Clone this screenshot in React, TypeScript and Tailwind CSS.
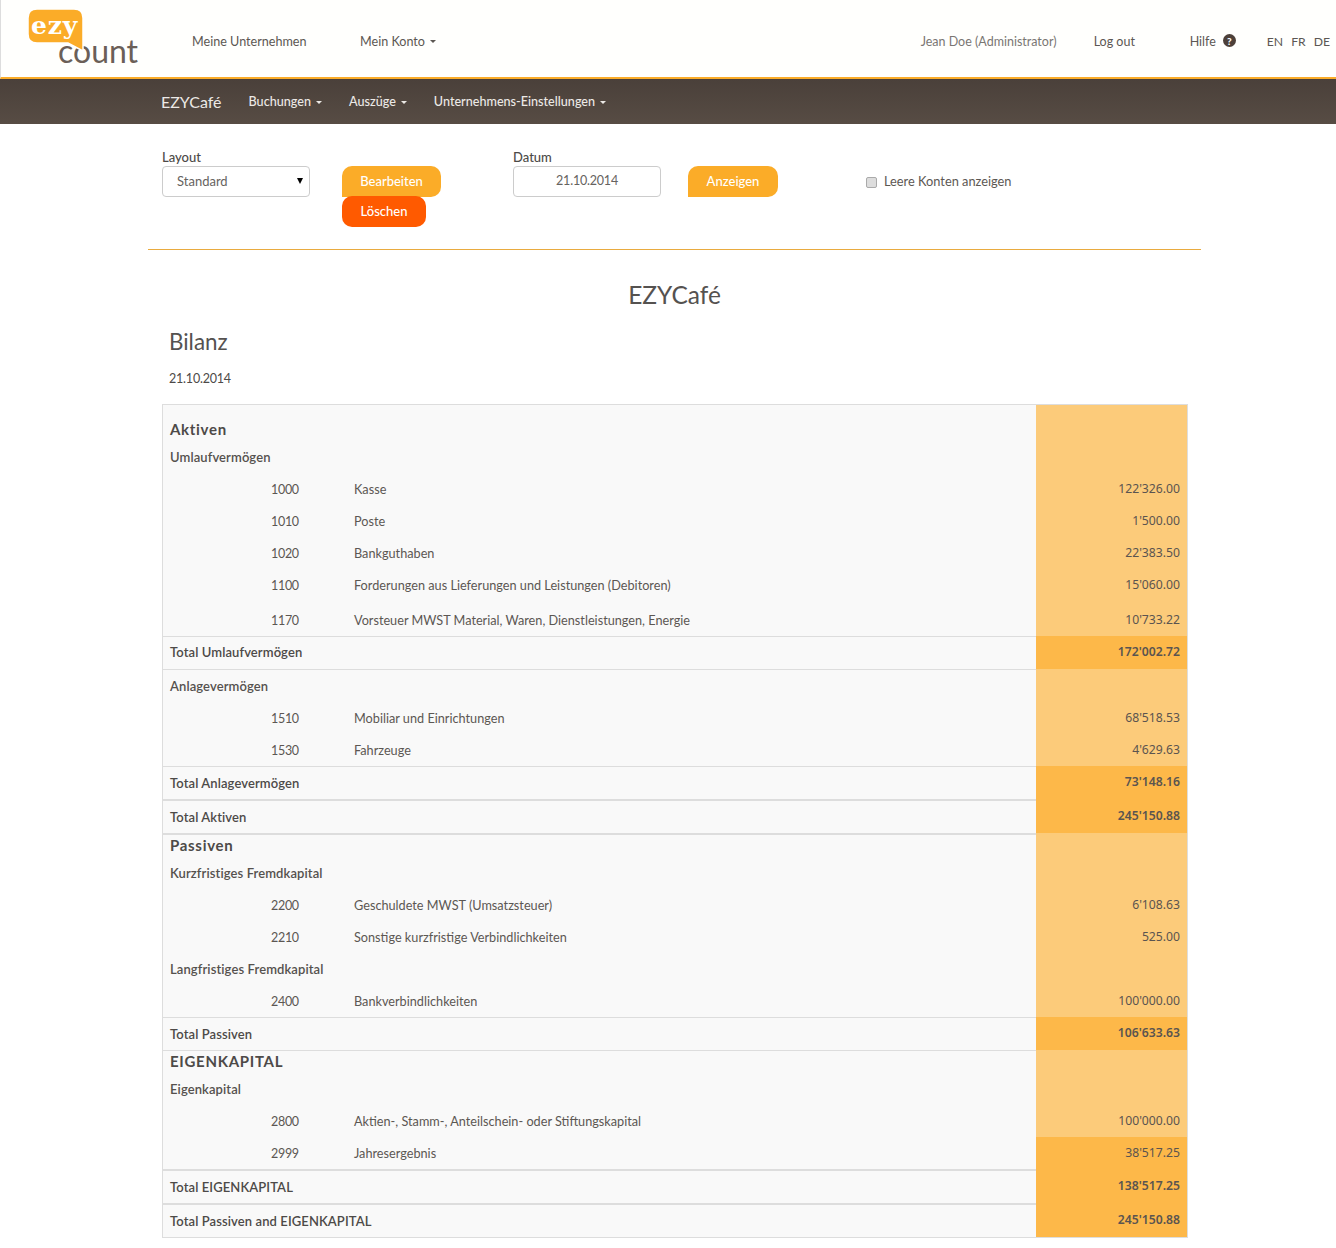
type Row = {
   kind: 'head' | 'group' | 'account' | 'total';
   label: string;
   no?: string;
   amount?: string;
   height: string;
   pad?: string;
   amountPad?: string;
   border?: string;
   dark?: boolean;
};

const thin = 'border-t border-[#dddddd]';
const thick = 'border-t-2 border-[#dddddd]';

const rows: Row[] = [
   { kind: 'head', label: 'Aktiven', height: 'h-[36px]', pad: 'pt-[12px]' },
   { kind: 'group', label: 'Umlaufvermögen', height: 'h-[32px]' },
   { kind: 'account', no: '1000', label: 'Kasse', amount: "122'326.00", height: 'h-[32px]' },
   { kind: 'account', no: '1010', label: 'Poste', amount: "1'500.00", height: 'h-[32px]' },
   { kind: 'account', no: '1020', label: 'Bankguthaben', amount: "22'383.50", height: 'h-[32px]' },
   { kind: 'account', no: '1100', label: 'Forderungen aus Lieferungen und Leistungen (Debitoren)', amount: "15'060.00", height: 'h-[32px]' },
   { kind: 'account', no: '1170', label: 'Vorsteuer MWST Material, Waren, Dienstleistungen, Energie', amount: "10'733.22", height: 'h-[35px]', pad: 'pt-[5px]', amountPad: 'pt-[3px]' },
   { kind: 'total', label: 'Total Umlaufvermögen', amount: "172'002.72", height: 'h-[33px]', border: thin, pad: 'pt-0' },
   { kind: 'group', label: 'Anlagevermögen', height: 'h-[33px]', border: thin },
   { kind: 'account', no: '1510', label: 'Mobiliar und Einrichtungen', amount: "68'518.53", height: 'h-[32px]' },
   { kind: 'account', no: '1530', label: 'Fahrzeuge', amount: "4'629.63", height: 'h-[32px]' },
   { kind: 'total', label: 'Total Anlagevermögen', amount: "73'148.16", height: 'h-[33px]', border: thin },
   { kind: 'total', label: 'Total Aktiven', amount: "245'150.88", height: 'h-[34px]', border: thick },
   { kind: 'head', label: 'Passiven', height: 'h-[24px]', border: thick, pad: 'pb-[1px]' },
   { kind: 'group', label: 'Kurzfristiges Fremdkapital', height: 'h-[32px]' },
   { kind: 'account', no: '2200', label: 'Geschuldete MWST (Umsatzsteuer)', amount: "6'108.63", height: 'h-[32px]' },
   { kind: 'account', no: '2210', label: 'Sonstige kurzfristige Verbindlichkeiten', amount: '525.00', height: 'h-[32px]' },
   { kind: 'group', label: 'Langfristiges Fremdkapital', height: 'h-[32px]' },
   { kind: 'account', no: '2400', label: 'Bankverbindlichkeiten', amount: "100'000.00", height: 'h-[32px]' },
   { kind: 'total', label: 'Total Passiven', amount: "106'633.63", height: 'h-[33px]', border: thin },
   { kind: 'head', label: 'EIGENKAPITAL', height: 'h-[23px]', border: thin, pad: 'pb-[1px]' },
   { kind: 'group', label: 'Eigenkapital', height: 'h-[32px]' },
   { kind: 'account', no: '2800', label: 'Aktien-, Stamm-, Anteilschein- oder Stiftungskapital', amount: "100'000.00", height: 'h-[32px]' },
   { kind: 'account', no: '2999', label: 'Jahresergebnis', amount: "38'517.25", height: 'h-[32px]', dark: true },
   { kind: 'total', label: 'Total EIGENKAPITAL', amount: "138'517.25", height: 'h-[34px]', border: thick },
   { kind: 'total', label: 'Total Passiven and EIGENKAPITAL', amount: "245'150.88", height: 'h-[34px]', border: thick },
];

function Logo() {
   return (
      <svg width="112" height="60" viewBox="0 0 112 60" className="shrink-0">
         <text x="30" y="54" fontFamily="'Lato', sans-serif" fontWeight="400" fontSize="32" fill="#6b5f58">
            count
         </text>
         <path
            d="M9 0H46Q55 0 55 9V42L40 34H9Q0 34 0 25V9Q0 0 9 0Z"
            fill="#fbac28"
            stroke="#ffffff"
            strokeWidth="1.5"
         />
         <text x="3" y="25" fontFamily="'DejaVu Serif', serif" fontWeight="700" fontSize="25" letterSpacing="0.8" fill="#ffffff">
            ezy
         </text>
      </svg>
   );
}

function Caret({ className }: { className: string }) {
   return <span className={`inline-block border-x-[3px] border-t-[3px] border-x-transparent ${className}`} />;
}

function NavItem({ label }: { label: string }) {
   return (
      <span className="flex items-center gap-[5px] pt-[2px] text-[12.6px] font-medium text-[#ece9e6]">
         {label}
         <Caret className="border-t-[#ece9e6]" />
      </span>
   );
}

function TableRow({ row }: { row: Row }) {
   const isDark = row.kind === 'total' || row.dark;
   return (
      <div className={`flex ${row.height}`}>
         <div className={`flex flex-1 items-center pl-[7px] text-[#4d4a48] ${row.border ?? ''} ${row.pad ?? 'pt-[2px]'}`}>
            {row.kind === 'head' && (
               <span className="text-[15px] font-bold tracking-[0.7px]">{row.label}</span>
            )}
            {row.kind === 'group' && (
               <span className="text-[13px] font-semibold tracking-[0.1px] text-[#55514e]">{row.label}</span>
            )}
            {row.kind === 'total' && (
               <span className="text-[13px] font-semibold tracking-[0.1px]">{row.label}</span>
            )}
            {row.kind === 'account' && (
               <>
                  <span className="w-[184px] pl-[101px] text-[12.5px] tracking-[-0.3px] text-[#5c5753]">{row.no}</span>
                  <span className="text-[12.7px] text-[#5c5753]">{row.label}</span>
               </>
            )}
         </div>
         <div
            className={`flex w-[151px] shrink-0 items-center justify-end pr-[7px] text-[12.2px] text-[#5a5450] [font-family:'Noto_Sans',sans-serif] ${
               isDark ? 'bg-[#fdb849]' : 'bg-[#fccb7a]'
            } ${row.kind === 'total' ? 'font-semibold' : ''} ${row.amountPad ?? ''}`}
         >
            {row.amount}
         </div>
      </div>
   );
}

export default function App() {
   return (
      <div className="min-h-[1248px] bg-white text-[13px] text-[#4d4a48] [font-family:Lato,sans-serif]">
         <header className="flex h-[79px] items-center border-b-2 border-l border-b-[#fbac28] border-l-[#dddddd] bg-[#fffffd] pl-[27px] pr-[6px]">
            <Logo />
            <nav className="mt-[7px] ml-[52px] flex items-center text-[12.6px] text-[#5c5753]">
               <span className="w-[168px]">Meine Unternehmen</span>
               <span className="flex items-center gap-[5px]">
                  Mein Konto <Caret className="border-t-[#5c5753]" />
               </span>
            </nav>
            <div className="mt-[7px] ml-auto flex items-center text-[12.5px] text-[#5c5753]">
               <span className="w-[173px] text-[#7a7673]">Jean Doe (Administrator)</span>
               <span className="w-[96px]">Log out</span>
               <span className="mr-[7px]">Hilfe</span>
               <span className="-mt-[3px] flex h-[13px] w-[13px] items-center justify-center rounded-full bg-[#4d4039] text-[10px] font-black leading-none text-white">
                  ?
               </span>
               <div className="ml-[31px] flex gap-[8px] text-[12.2px]">
                  <span>EN</span>
                  <span>FR</span>
                  <span>DE</span>
               </div>
            </div>
         </header>

         <div className="flex h-[45px] items-center gap-[27px] bg-gradient-to-b from-[#4a403a] to-[#574c44] pl-[161px]">
            <span className="text-[16px] text-[#ece9e6]">EZYCafé</span>
            <NavItem label="Buchungen" />
            <NavItem label="Auszüge" />
            <NavItem label="Unternehmens-Einstellungen" />
         </div>

         <main className="mx-[148px] w-[1053px]">
            <section className="flex h-[126px] items-start border-b border-[#e9ab3f] pl-[14px] pt-[26px]">
               <div className="w-[180px]">
                  <label className="block h-[16px] text-[13px] font-medium leading-[14px]">Layout</label>
                  <div className="relative h-[31px] w-[148px] rounded-[4px] border border-[#cccccc] bg-white pl-[14px] leading-[28px] text-[#666360]">
                     Standard
                     <span className="absolute right-[6px] top-[11px] border-x-[3.5px] border-t-[6px] border-x-transparent border-t-black" />
                  </div>
               </div>
               <div className="mt-[16px] w-[171px]">
                  <button className="block h-[31px] w-[99px] rounded-[10px] rounded-bl-none bg-[#fbac28] text-center font-medium text-white">
                     Bearbeiten
                  </button>
                  <button className="-mt-px block h-[31px] w-[84px] rounded-[10px] bg-[#ff5a00] text-center font-medium text-white">
                     Löschen
                  </button>
               </div>
               <div className="w-[175px]">
                  <label className="block h-[16px] text-[13px] font-medium leading-[14px]">Datum</label>
                  <div className="h-[31px] w-[148px] rounded-[4px] border border-[#cccccc] bg-white text-center text-[12.5px] leading-[28px] tracking-[-0.2px] text-[#666360]">
                     21.10.2014
                  </div>
               </div>
               <button className="mt-[16px] h-[31px] w-[90px] rounded-[10px] rounded-bl-none bg-[#fbac28] text-center font-medium text-white">
                  Anzeigen
               </button>
               <label className="mt-[16px] ml-[88px] flex h-[31px] items-center gap-[7px] pt-[1px] text-[12.8px] text-[#5c5753]">
                  <input
                     type="checkbox"
                     disabled
                     className="h-[11px] w-[11px] appearance-none rounded-[2px] border border-[#aaaaaa] bg-[#dddddd]"
                  />
                  Leere Konten anzeigen
               </label>
            </section>

            <h1 className="mt-[30px] h-[30px] text-center text-[24.5px] leading-[30px] text-[#555250]">EZYCafé</h1>
            <h2 className="mt-[17px] ml-[21px] h-[30px] text-[22.4px] leading-[30px] text-[#555250]">Bilanz</h2>
            <p className="mt-[13px] ml-[21px] h-[18px] text-[12.5px] leading-[18px] tracking-[-0.2px]">21.10.2014</p>

            <div className="mt-[16px] ml-[14px] w-[1026px] border border-[#dddddd] bg-[#f9f9f9]">
               {rows.map((row) => (
                  <TableRow key={row.label + (row.no ?? '')} row={row} />
               ))}
            </div>
         </main>
      </div>
   );
}
